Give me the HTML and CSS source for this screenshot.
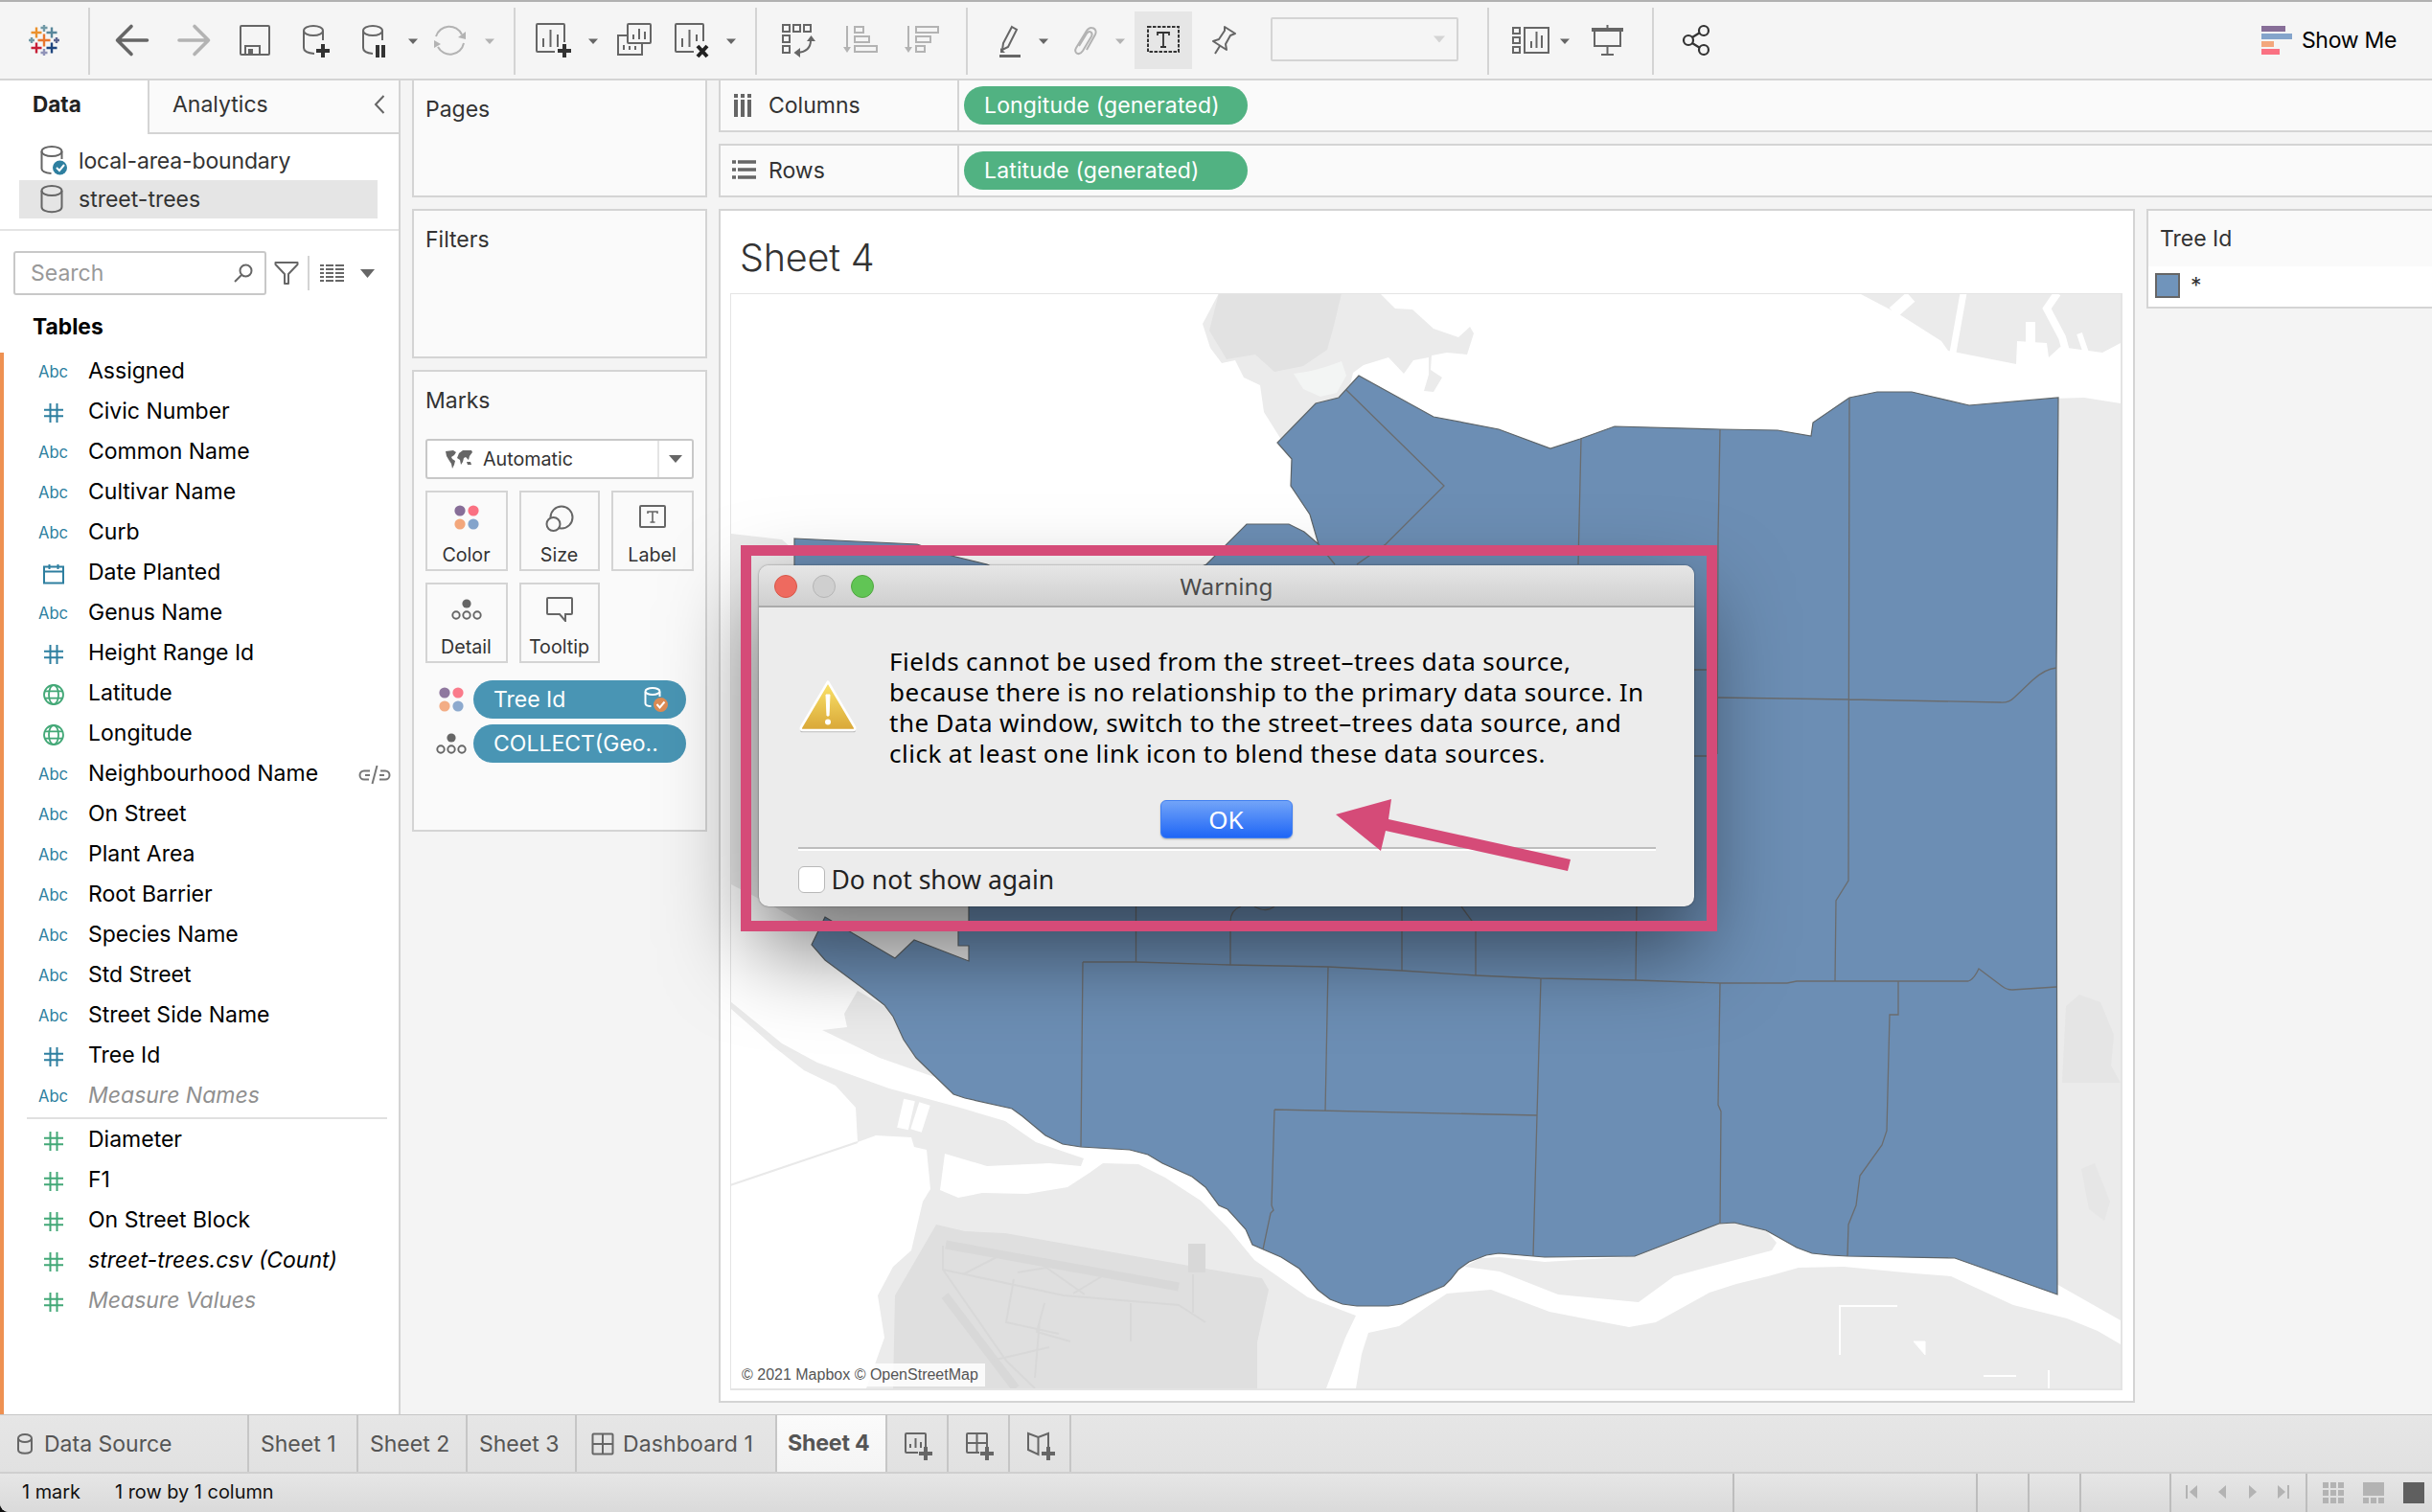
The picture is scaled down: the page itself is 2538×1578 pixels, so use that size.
FILE: index.html
```
<!DOCTYPE html>
<html lang="en">
<head>
<meta charset="utf-8">
<title>Sheet 4</title>
<link rel="stylesheet" href="styles.css">
</head>
<body>
<svg class="defs" width="0" height="0" aria-hidden="true">
  <symbol id="hash" viewBox="0 0 36 42"><path d="M14.5 11v20M21.5 11v20M8 17.7h20M8 24.3h20" fill="none" stroke="currentColor" stroke-width="2"/></symbol>
  <symbol id="calendar" viewBox="0 0 36 42"><path d="M8 13.5h20v17H8zM8 18.5h20M13.5 11v5M22.5 11v5" fill="none" stroke="currentColor" stroke-width="2"/></symbol>
  <symbol id="globe" viewBox="0 0 36 42"><g fill="none" stroke="currentColor" stroke-width="1.8"><circle cx="18" cy="21" r="10"/><ellipse cx="18" cy="21" rx="5" ry="10"/><path d="M9 17.3h18M9 24.7h18"/></g></symbol>
  <symbol id="caret" viewBox="0 0 10 6"><path d="M0 0h10L5 6z" fill="currentColor"/></symbol>
  <symbol id="dots" viewBox="0 0 26 26"><circle cx="6" cy="6" r="5.6" fill="#876e98"/><circle cx="20" cy="6" r="5.6" fill="#fa7182"/><circle cx="6" cy="20" r="5.6" fill="#f3a77c"/><circle cx="20" cy="20" r="5.6" fill="#84a4cb"/></symbol>
  <symbol id="detail" viewBox="0 0 32 22"><circle cx="16" cy="5" r="4.6" fill="#666"/><g fill="none" stroke="#666" stroke-width="1.9"><circle cx="5" cy="17" r="3.7"/><circle cx="16" cy="17" r="3.7"/><circle cx="27" cy="17" r="3.7"/></g></symbol>
</svg>

<div class="app">
  <header class="toolbar">
    <svg width="92" viewBox="0 2 92 80" fill="none" stroke-width="2.4">
      <path d="M46 35.5v13M39.5 42h13" stroke="#e8762d"/>
      <path d="M38 28.5v11M32.5 34h11" stroke="#eb912c"/>
      <path d="M54 28.5v11M48.5 34h11" stroke="#59879b"/>
      <path d="M38 44.5v11M32.5 50h11" stroke="#c72037"/>
      <path d="M54 44.5v11M48.5 50h11" stroke="#1f457e"/>
      <path d="M46 26v7M42.5 29h7" stroke="#7199a6"/>
      <path d="M46 51v7M42.5 55h7" stroke="#9093b8"/>
      <path d="M33 39v6M30 42h6" stroke="#7199a6"/>
      <path d="M59 39v6M56 42h6" stroke="#5b6591"/>
    </svg>
    <i class="sep"></i>
    <svg width="76" viewBox="94 2 76 80"><path d="M153.5 42H123M137 27.5L122.5 42 137 56.5" fill="none" stroke="#666" stroke-width="3.6" stroke-linecap="round" stroke-linejoin="round"/></svg>
    <svg width="65" viewBox="170 2 65 80"><path d="M187 42h30.5M203 27.5L217.5 42 203 56.5" fill="none" stroke="#b3b3b3" stroke-width="3.6" stroke-linecap="round" stroke-linejoin="round"/></svg>
    <svg width="65" viewBox="235 2 65 80" fill="none" stroke="#666" stroke-width="2"><rect x="251" y="27" width="30" height="30" rx="1"/><path d="M256 57v-9h15v9"/><rect x="259" y="51" width="5" height="5" fill="#666" stroke="none"/></svg>
    <svg width="62" viewBox="300 2 62 80" fill="none" stroke="#666" stroke-width="2"><ellipse cx="327" cy="32" rx="10" ry="5"/><path d="M317 32v18q0 5 11 6M337 32v10"/><path d="M330 53h14M337 46v14" stroke="#333" stroke-width="4"/></svg>
    <svg width="50" viewBox="362 2 50 80" fill="none" stroke="#666" stroke-width="2"><ellipse cx="389" cy="32" rx="10" ry="5"/><path d="M379 32v18q0 5 10 6M399 32v10"/><path d="M394 47v13M400 47v13" stroke="#333" stroke-width="4"/></svg>
    <svg width="32" viewBox="412 2 32 80"><path d="M426 40.5h10l-5 5.5z" fill="#666"/></svg>
    <svg width="54" viewBox="444 2 54 80" fill="none" stroke="#b3b3b3" stroke-width="2"><path d="M455 38a14.5 14.5 0 0 1 27-2M484 45a14.5 14.5 0 0 1-27 4"/><path d="M486 33v8l-8-2zM453 50v-8l7 4z" fill="#b3b3b3" stroke="none"/></svg>
    <svg width="38" viewBox="498 2 38 80"><path d="M506 40.5h10l-5 5.5z" fill="#b3b3b3"/></svg>
    <i class="sep"></i>
    <svg width="66" viewBox="538 2 66 80" fill="none" stroke="#666" stroke-width="2"><path d="M589 44V26q0-1-1-1h-27q-1 0-1 1v27q0 1 1 1h18M567 49v-9M574.5 49V31M582 49V36"/><path d="M582 53h14M589 46v14" stroke="#333" stroke-width="4"/></svg>
    <svg width="30" viewBox="604 2 30 80"><path d="M614 40.5h10l-5 5.5z" fill="#666"/></svg>
    <svg width="58" viewBox="634 2 58 80" fill="none" stroke="#666" stroke-width="2"><rect x="655" y="25" width="24" height="20" rx="1"/><path d="M655 37h-10v20h25V45M661 41v-5M667 41V30M673 41v-8M651 52v-5M657 52v-4M663 52v-4"/></svg>
    <svg width="58" viewBox="692 2 58 80" fill="none" stroke="#666" stroke-width="2"><path d="M734 43V26q0-1-1-1h-27q-1 0-1 1v27q0 1 1 1h18M712 49v-9M719.5 49V31M727 43V36"/><path d="M728 48l10 11M738 48l-10 11" stroke="#222" stroke-width="4"/></svg>
    <svg width="38" viewBox="750 2 38 80"><path d="M758 40.5h10l-5 5.5z" fill="#666"/></svg>
    <i class="sep"></i>
    <svg width="76" viewBox="790 2 76 80" fill="none" stroke="#666" stroke-width="2"><rect x="817" y="26" width="7" height="7"/><rect x="828" y="26" width="7" height="7"/><rect x="839" y="26" width="7" height="7"/><rect x="817" y="37" width="7" height="7"/><rect x="817" y="48" width="7" height="7"/><path d="M846 42q0 12-14 13"/><path d="M842 43l4.5-6 4.5 6zM835 50l-6.5 5 6.5 5z" fill="#666" stroke="none"/></svg>
    <svg width="64" viewBox="866 2 64 80" fill="none" stroke="#b3b3b3" stroke-width="2"><path d="M884 27v24"/><path d="M880 49h8l-4 6z" fill="#b3b3b3" stroke="none"/><rect x="892" y="28" width="9" height="6"/><rect x="892" y="38" width="15" height="6"/><rect x="892" y="48" width="23" height="6"/></svg>
    <svg width="78" viewBox="930 2 78 80" fill="none" stroke="#b3b3b3" stroke-width="2"><path d="M948 27v24"/><path d="M944 49h8l-4 6z" fill="#b3b3b3" stroke="none"/><rect x="956" y="28" width="23" height="6"/><rect x="956" y="38" width="15" height="6"/><rect x="956" y="48" width="9" height="6"/></svg>
    <i class="sep"></i>
    <svg width="64" viewBox="1010 2 64 80" fill="none" stroke="#666" stroke-width="2"><path d="M1056 28l5 3-9 18-6 3 1-7z"/><path d="M1043 58.5h22" stroke-width="3"/><path d="M1044 50l5 5h-5z" fill="#666" stroke="none"/></svg>
    <svg width="32" viewBox="1074 2 32 80"><path d="M1084 40.5h10l-5 5.5z" fill="#666"/></svg>
    <svg width="48" viewBox="1106 2 48 80" fill="none" stroke="#b3b3b3" stroke-width="2"><path d="M1126 48l8-13c3-4 7-1 5 3l-9 15c-4 6-10 2-7-3l11-18c4-6 12-2 9 4l-9 16"/></svg>
    <svg width="30" viewBox="1154 2 30 80"><path d="M1164 40.500h10l-5 5.500z" fill="#b3b3b3"/></svg>
    <svg width="60" viewBox="1184 2 60 80" fill="none" stroke="#333" stroke-width="2"><rect class="tool-bg" x="1184" y="12" width="60" height="60"/><rect x="1198" y="28" width="32" height="26" stroke-dasharray="3.5 1.5"/><path d="M1208 37v-3h12v3M1214 34v15M1211 49h6" stroke-width="1.8"/></svg>
    <svg width="66" viewBox="1244 2 66 80" fill="none" stroke="#666" stroke-width="2"><path d="M1278 28l11 7-5 2-5 9 1 6-14-9 6-2 6-9zM1273 48l-5 8" stroke-linejoin="round"/></svg>
    <div class="combo"><svg width="12" height="8"><use href="#caret"/></svg></div>
    <i class="sep"></i>
    <svg width="68" viewBox="1554 2 68 80" fill="none" stroke="#666" stroke-width="2"><rect x="1579" y="29" width="7" height="6"/><rect x="1579" y="39" width="7" height="6"/><rect x="1579" y="49" width="7" height="6"/><rect x="1591" y="29" width="25" height="26"/><path d="M1598 50v-7M1603.5 50V33M1609 50V37"/></svg>
    <svg width="24" viewBox="1622 2 24 80"><path d="M1628 40.5h10l-5 5.5z" fill="#666"/></svg>
    <svg width="78" viewBox="1646 2 78 80" fill="none" stroke="#666" stroke-width="2"><path d="M1661 31h33" stroke-width="4"/><path d="M1664 32v16h27V32M1677.5 26v4M1677.5 48v8M1671 57h13"/></svg>
    <i class="sep"></i>
    <svg width="80" viewBox="1726 2 80 80" fill="none" stroke="#333" stroke-width="2.2"><circle cx="1762" cy="42" r="5"/><circle cx="1778" cy="32" r="5"/><circle cx="1778" cy="52" r="5"/><path d="M1766 39l8-5M1766 45l8 5"/></svg>
    <div class="showme"><svg width="32" height="30"><path d="M0 0h25v6H0z" fill="#876e98"/><path d="M0 8h32v6H0z" fill="#84a4cb"/><path d="M0 16h13v6H0z" fill="#f3a77c"/><path d="M0 24h19v6H0z" fill="#fa7182"/></svg><span>Show Me</span></div>
  </header>

  <main class="work">
    <aside class="sidebar">
      <div class="side-tabs">
        <div class="side-tab on">Data</div>
        <div class="side-tab off"><span>Analytics</span><svg width="12" height="20"><path d="M10.5 1L2 10l8.500 9" fill="none" stroke="#666" stroke-width="2"/></svg></div>
      </div>
      <div class="sources">
        <div class="source"><svg width="30" height="34" fill="none" stroke="#666" stroke-width="2"><ellipse cx="12" cy="7" rx="10.5" ry="5"/><path d="M1.5 7v18q0 4 10 5M22.5 7v8"/><circle cx="20.5" cy="24" r="7.5" fill="#2e7fa0" stroke="none"/><path d="M17 24l3 3 5-6" stroke="#fff"/></svg><span>local-area-boundary</span></div>
        <div class="source picked"><svg width="30" height="34" fill="none" stroke="#666" stroke-width="2"><ellipse cx="12" cy="8" rx="10.5" ry="5"/><path d="M1.5 8v17c0 7 21 7 21 0V8"/></svg><span>street-trees</span></div>
      </div>
      <div class="finder">
        <div class="search"><span>Search</span><svg width="20" height="20" fill="none" stroke="#666" stroke-width="2"><circle cx="12.5" cy="7.5" r="6"/><path d="M8 12l-7 7"/></svg></div>
        <svg class="funnel" width="26" height="26" fill="none" stroke="#666" stroke-width="2"><path d="M1.5 2h23v2L15 14v10h-4V14L1.5 4z" stroke-linejoin="round"/></svg>
        <i></i>
        <svg class="list" width="26" height="20" stroke="#666" stroke-width="2.2"><path d="M0 2h4M6 2h8M16 2h9M0 6h4M6 6h8M16 6h9M0 10h4M6 10h8M16 10h9M0 14h4M6 14h8M16 14h9M0 18h4M6 18h8M16 18h9"/></svg>
        <svg width="15" height="9"><path d="M0 0h15L7.5 9z" fill="#666"/></svg>
      </div>
      <h2>Tables</h2>
      <div class="tables">
        <ul>
          <li><b>Abc</b><span>Assigned</span></li>
          <li><svg><use href="#hash"/></svg><span>Civic Number</span></li>
          <li><b>Abc</b><span>Common Name</span></li>
          <li><b>Abc</b><span>Cultivar Name</span></li>
          <li><b>Abc</b><span>Curb</span></li>
          <li><svg><use href="#calendar"/></svg><span>Date Planted</span></li>
          <li><b>Abc</b><span>Genus Name</span></li>
          <li><svg><use href="#hash"/></svg><span>Height Range Id</span></li>
          <li><svg class="green"><use href="#globe"/></svg><span>Latitude</span></li>
          <li><svg class="green"><use href="#globe"/></svg><span>Longitude</span></li>
          <li><b>Abc</b><span>Neighbourhood Name</span><svg class="link" viewBox="0 0 34 20" fill="none" stroke="#777" stroke-width="2"><path d="M12 5.500H6a4.500 4.500 0 0 0 0 9h5M7 10h5M22 14.500h6a4.500 4.500 0 0 0 0-9h-5M27 10h-5M19.500 0l-5 19"/></svg></li>
          <li><b>Abc</b><span>On Street</span></li>
          <li><b>Abc</b><span>Plant Area</span></li>
          <li><b>Abc</b><span>Root Barrier</span></li>
          <li><b>Abc</b><span>Species Name</span></li>
          <li><b>Abc</b><span>Std Street</span></li>
          <li><b>Abc</b><span>Street Side Name</span></li>
          <li><svg><use href="#hash"/></svg><span>Tree Id</span></li>
          <li class="it dim"><b>Abc</b><span>Measure Names</span></li>
        </ul>
        <ul class="measures">
          <li><svg><use href="#hash"/></svg><span>Diameter</span></li>
          <li><svg><use href="#hash"/></svg><span>F1</span></li>
          <li><svg><use href="#hash"/></svg><span>On Street Block</span></li>
          <li class="it"><svg><use href="#hash"/></svg><span>street-trees.csv (Count)</span></li>
          <li class="it dim"><svg><use href="#hash"/></svg><span>Measure Values</span></li>
        </ul>
      </div>
    </aside>

    <section class="cards">
      <div class="card pages">Pages</div>
      <div class="card filters">Filters</div>
      <div class="card marks">
        <div class="marks-title">Marks</div>
        <div class="mark-type">
          <svg width="28" height="20" fill="#666"><path d="M0 2l8-1 3 2-2 3-3 2 1 2 3 2-1 4-2 4-1-5-2-3-3-5zM14 4l4-3 9 0 1 2-3 4-1 4-3-3-2 1-1 4-2 3-1-5-3-2zM22 13l4 0 1 3-4 0z"/></svg>
          <span>Automatic</span><i><svg width="14" height="8"><path d="M0 0h14L7 8z" fill="#666"/></svg></i>
        </div>
        <div class="mark-grid">
          <div><svg width="26" height="26"><use href="#dots"/></svg>Color</div>
          <div><svg width="30" height="28" fill="none" stroke="#666" stroke-width="2"><circle cx="17" cy="13" r="11.5"/><circle cx="8.5" cy="20" r="7" fill="#fafafa"/></svg>Size</div>
          <div><svg width="28" height="24" fill="none" stroke="#666" stroke-width="2"><rect x="1" y="1" width="26" height="22" rx="1"/><path d="M9 9V7h10v2M14 7v11M11.5 18h5" stroke-width="1.6"/></svg>Label</div>
          <div><svg width="32" height="22"><use href="#detail"/></svg>Detail</div>
          <div><svg width="28" height="26" fill="none" stroke="#666" stroke-width="2"><path d="M1 2q0-1 1-1h24q1 0 1 1v15q0 1-1 1h-6v7l-6-7H2q-1 0-1-1z"/></svg>Tooltip</div>
        </div>
        <div class="shelf-pill"><svg class="faded" width="26" height="26"><use href="#dots"/></svg><div class="pill blue">Tree Id<svg width="26" height="26" fill="none" stroke="#fff" stroke-width="2"><ellipse cx="9" cy="4.5" rx="7.5" ry="3.5"/><path d="M1.5 5v12q0 3 6 3M16.5 5v5"/><circle cx="17.5" cy="18.500" r="7.5" fill="#dc8b54" stroke="none"/><path d="M13.5 18l3 3.500 5-6"/></svg></div></div>
        <div class="shelf-pill"><svg width="32" height="22"><use href="#detail"/></svg><div class="pill blue">COLLECT(Geo..</div></div>
      </div>
    </section>

    <section class="view">
      <div class="shelf"><div class="shelf-name"><svg width="22" height="24" stroke="#666" stroke-width="4"><path d="M4 0v4M4 6v18M11 0v4M11 6v18M18 0v4M18 6v18"/></svg>Columns</div><div class="pill green-pill">Longitude (generated)</div></div>
      <div class="shelf"><div class="shelf-name"><svg width="26" height="24" stroke="#666" stroke-width="3.6"><path d="M0 3h4M6 3h19M0 11h4M6 11h19M0 19h4M6 19h19"/></svg>Rows</div><div class="pill green-pill">Latitude (generated)</div></div>
      <div class="canvas-row">
        <div class="sheet">
          <h1>Sheet 4</h1>
          <div class="map">
            <svg width="1450" height="1142" viewBox="763 307 1450 1142">
              <g fill="#ebebeb">
                <path d="M1272 306L1255 338 1263 363 1275 379 1289 376 1298 394 1315 402 1319 430 1339 462 1400 440 1412 389 1423 381 1449 373 1465 390 1475 376 1491 373V391L1486 408 1496 409 1505 394 1493 386 1494 371 1510 368 1531 370 1538 348 1534 341 1522 352 1496 343 1474 323 1456 322 1440 306z"/>
                <path d="M1940 306L1982 328 2026 356 2033 366 2104 380 2105 356 2136 358 2138 373 2150 362 2194 368 2213 358V306z"/>
                <path d="M2140 416L2175 415 2213 421V1378L2146 1340z"/>
                <path d="M2213 1403L2189 1389 2157 1376 2101 1362 2036 1332 1998 1329 1924 1322 1877 1323 1845 1332 1812 1340 1784 1349 1728 1380 1700 1385 1663 1378 1617 1369 1556 1346 1510 1350 1486 1366 1460 1384 1428 1391 1421 1413 1415 1449H2213z"/>
                <path d="M1528 1322L1545 1313 1565 1312 1612 1317 1695 1312 1794 1270 1824 1278 1843 1284 1854 1297 1849 1305 1784 1322 1747 1332 1710 1359 1626 1351 1565 1327z"/>
                <path d="M762 1045L816 1089 853 1109 928 1136 1002 1156 1049 1170 1081 1192 1131 1209 1128 1217 1095 1214 1030 1217 986 1204 981 1242 1000 1250 1025 1245 1072 1246 1114 1239 1137 1224 1151 1214 1188 1215 1216 1229 1253 1253 1281 1281 1309 1315 1365 1354 1415 1373 1404 1396 1384 1449H904L923 1396 916 1352 932 1322 951 1305 963 1254 971 1241 967 1200 954 1197 951 1187 914 1185 895 1192 893 1156 872 1133 839 1117 807 1092 788 1075 762 1052z"/>
                <path d="M895 1034L881 1058 884 1072 858 1075 918 1104 975 1124 940 1060z"/>
                <path d="M763 557L816 563 835 580 1020 900V1015H920L853 972 802 943 763 923z"/>
              </g>
              <g fill="#e2e2e2">
                <path d="M1272 306L1262 345 1280 375 1310 370 1330 388 1360 382 1385 365 1392 340 1400 306z"/>
                <path d="M2156 1050L2170 1038 2192 1046 2206 1080 2203 1112 2213 1130H2152z" opacity=".7"/>
                <path d="M2172 1220l14-6 16 40-6 20-16-12z" opacity=".5"/>
              </g>
              <path fill="#dfdfdf" d="M977 1278L1007 1285 1049 1287 1258 1324 1317 1334 1324 1346 1312 1401V1449H932L934 1352z"/>
              <path d="M1350 390q22-2 50-13l5 15-10 18-17 4-18-8z" fill="#f3f5f4"/>
              <g fill="none" stroke="#d8d8d8">
                <path d="M987 1299L1230 1343" stroke-width="9"/><path d="M1249 1298V1328" stroke-width="18"/><path d="M986 1352L1060 1449" stroke-width="9"/>
                <path d="M984 1300V1325L1050 1420 1080 1449M984 1325L1110 1352 1230 1362 1258 1380M1005 1330l35-18M1062 1328l30-5 40 28M1120 1350l30-18M1058 1335l-8 45 55 12M1180 1360v40M1245 1330v40M1090 1360l-8 30 35 10M1035 1420l60-14M1085 1378l-5 60" stroke-width="2"/>
              </g>
              <g stroke="#fff" fill="none">
                <path d="M2049 306L2038 368" stroke-width="7"/><path d="M1994 310L1976 326" stroke-width="13"/><path d="M2119 336V380" stroke-width="10"/><path d="M2147 306L2136 322 2152 352 2158 374" stroke-width="8"/><path d="M2170 348l12 35" stroke-width="6"/>
                <path d="M949 1148l-7 30M965 1152l-9 28" stroke-width="12"/><path d="M1920 1414v-51h60M2070 1436h34M2138 1430v19" stroke-width="2"/><path d="M1997 1400h12v14z" fill="#fff"/>
              </g>
              <path d="M895 1192L762 1237" stroke="#e9e9e9" stroke-width="2"/>
              <path d="M829 562L957 568 993 580 1030 589 1140 640 1259 589 1301 547 1345 547 1361 555 1376 568 1367 537 1347 507 1348 479 1333 462 1373 421 1397 415 1418 392 1496 435 1564 448 1618 468 1649 458 1685 445 1795 448 1855 449 1890 455 1892 441 1930 415 1959 409H1995L2055 423 2148 415 2146 700 2147 1351 2040 1313 1928 1311 1910 1310 1891 1308 1875 1302 1843 1284 1822 1279 1810 1276 1794 1277 1706 1311 1612 1312 1564 1308 1551 1310 1533 1317 1522 1325 1514 1335 1507 1342 1463 1361 1449 1363H1416L1401 1361 1388 1356 1375 1346 1356 1324 1337 1312 1307 1299 1300 1283 1281 1262 1272 1258 1258 1239 1244 1228 1213 1214 1198 1205 1179 1200 1128 1197 1109 1194 1091 1185 1067 1165 1056 1157 1007 1146 995 1142 956 1104 943 1085 932 1061 923 1049 900 1031 861 1002 847 986 861 957 934 1000 954 981 1011 1003V987H1000V970H1011V900L829 700z" fill="#6c8eb4" stroke="#5d6468" stroke-width="1.2"/>
              <g fill="none" stroke="#6a6c6e" stroke-width="1.3">
                <path d="M1405 407L1507 507 1446 568 1416 589M1376 568L1393 589M1650 458L1647 589M1795 448L1793 560 1792 787M1768 699H1793M1768 789H1792M1793 728L1930 730 2087 733Q2096 734 2102 728L2121 710Q2134 698 2146 697M1930 415L1929 919 1916 940 1915 1024"/>
                <path d="M1130 1004H1185L1284 1007 1386 1009 1463 1013 1540 1018 1607 1021 1707 1023 1795 1026H1865L1875 1024H2054Q2060 1022 2065 1011L2089 1029Q2094 1033 2100 1033L2146 1030"/>
                <path d="M1185.5 940V1004M1295 946Q1284 950 1284 962V1007M1309 946q12 7 21 0M1463 940V1013M1525 946L1536 961 1540 972V1018M1708 940L1707 1023"/>
                <path d="M1130 1004L1128 1197M1386 1009L1383 1160M1608 1021L1604 1164 1600 1311M1330 1158L1604 1164M1330 1158L1327 1258 1329 1263 1326 1266 1318 1304M1795 1026L1793 1153 1796 1160 1795 1277M1981 1024V1059H1972L1969 1180 1964 1195 1941 1227 1937 1258 1929 1278 1928 1311"/>
              </g>
            </svg>
            <div class="credit">© 2021 Mapbox © OpenStreetMap</div>
          </div>
        </div>
        <div class="legend"><div class="legend-title">Tree Id</div><div class="legend-item"><i></i><span>*</span></div></div>
      </div>
    </section>
  </main>

  <nav class="tabs">
    <div class="tab source-tab"><svg width="18" height="24" fill="none" stroke="#666" stroke-width="2"><ellipse cx="9" cy="6" rx="7" ry="4"/><path d="M2 6v12c0 5 14 5 14 0V6"/></svg>Data Source</div>
    <div class="tab w114">Sheet 1</div>
    <div class="tab w114">Sheet 2</div>
    <div class="tab w114">Sheet 3</div>
    <div class="tab w208"><svg width="24" height="24" fill="none" stroke="#666" stroke-width="2"><rect x="1.5" y="1.5" width="21" height="21" rx="1"/><path d="M12 2v20M2 12h20"/></svg>Dashboard 1</div>
    <div class="tab current">Sheet 4</div>
    <div class="tab add"><svg width="30" height="30" fill="none" stroke="#666" stroke-width="2"><path d="M23 16V3q0-1-1-1H3Q2 2 2 3v18q0 1 1 1h12M7 17v-4M12.5 17V7M18 17v-6"/><path d="M16 23h14M23 16v14" stroke-width="4"/></svg></div>
    <div class="tab add"><svg width="30" height="30" fill="none" stroke="#666" stroke-width="2"><path d="M23 16V3q0-1-1-1H3Q2 2 2 3v18q0 1 1 1h12M12.5 2v20M2 12h21"/><path d="M16 23h14M23 16v14" stroke-width="4"/></svg></div>
    <div class="tab add"><svg width="30" height="30" fill="none" stroke="#666" stroke-width="2"><path d="M23 16V2L12.5 6 2 2v17l10.500 5V6"/><path d="M16 23h14M23 16v14" stroke-width="4"/></svg></div>
  </nav>

  <footer class="status">
    <span class="mark-count">1 mark</span><span>1 row by 1 column</span>
    <div class="cells">
      <div class="c254"></div><div class="c54"></div><div class="c54"></div><div class="c94"></div>
      <div class="c142"><svg width="142" height="40" viewBox="2267 1538 142 40" fill="#b3b3b3"><path d="M2282 1550h2v14h-2zM2294 1550v14l-8-7zM2324 1550v14l-8-7zM2348 1550v14l8-7zM2378 1550v14l8-7zM2388 1550h2v14h-2z"/></svg></div>
      <div class="c130"><svg width="129" height="40" viewBox="2409 1538 129 40" fill="#b3b3b3"><path d="M2425 1547h6v6h-6zM2433 1547h6v6h-6zM2441 1547h6v6h-6zM2425 1555h6v6h-6zM2433 1555h6v6h-6zM2441 1555h6v6h-6zM2425 1563h6v6h-6zM2433 1563h6v6h-6zM2441 1563h6v6h-6zM2467 1547h22v14h-22zM2467 1563h6v6h-6zM2475 1563h6v6h-6zM2483 1563h6v6h-6z"/><path d="M2509 1547h22v22h-22z" fill="#5f5f5f"/></svg></div>
    </div>
  </footer>

  <div class="dialog">
    <div class="titlebar"><div class="lights"><i class="red"></i><i></i><i class="lime"></i></div>Warning</div>
    <div class="message">
      <svg width="60" height="56" viewBox="0 0 60 56"><defs><linearGradient id="gold" x1="0" y1="0" x2="0" y2="1"><stop offset="0" stop-color="#fbe46b"/><stop offset="1" stop-color="#d9a737"/></linearGradient></defs><path d="M2.500 53h55" stroke="#bbb" stroke-width="2.500" stroke-linecap="round"/><path d="M30 1.500L58 49q1 3-2 3H4q-3 0-2-3z" fill="url(#gold)" stroke="#fff" stroke-width="2.5" stroke-linejoin="round"/><path d="M28 15h4l-1 22h-2z" fill="#fff" stroke="#fff" stroke-linejoin="round"/><circle cx="30" cy="43.5" r="3" fill="#fff"/></svg>
      <p>Fields cannot be used from the street–trees data source,<br>because there is no relationship to the primary data source. In<br>the Data window, switch to the street–trees data source, and<br>click at least one link icon to blend these data sources.</p>
    </div>
    <button class="ok">OK</button>
    <label class="again"><i></i>Do not show again</label>
  </div>
  <div class="highlight"></div>
  <svg class="arrow" width="248" height="78" viewBox="1392 832 248 78"><path d="M1394 850L1452 834 1449 855 1639 897 1636 909 1446 867 1441 888z" fill="#d54b78"/></svg>
</div>
</body>
</html>
```
FILE: styles.css
```
* { box-sizing: border-box; }
body { margin: 0; background: #111; }
.defs { position: absolute; }
svg { display: block; flex: none; }
i { font-style: normal; }
h1, h2, p, ul { margin: 0; padding: 0; list-style: none; }

.app {
  position: relative;
  display: grid;
  grid-template-rows: 84px 1392px 62px 40px;
  width: 2538px;
  height: 1578px;
  overflow: hidden;
  border-bottom-left-radius: 9px;
  background: #f4f4f4;
  color: #333;
  font: 23px/1 Inter, "Liberation Sans", sans-serif;
  white-space: nowrap;
}

/* toolbar */
.toolbar { display: flex; border-top: 2px solid #b1b1b1; border-bottom: 2px solid #d4d4d4; background: #f5f5f5; }
.toolbar > svg { height: 80px; }
.sep { width: 2px; height: 70px; margin-top: 6px; background: #d4d4d4; }
.tool-bg { fill: #e6e6e6; stroke: none; }
.combo { display: flex; justify-content: flex-end; align-items: center; width: 196px; height: 46px; margin: 16px 30px 0 16px; padding-right: 12px; border: 2px solid #d4d4d4; border-radius: 2px; color: #d4d4d4; }
.showme { display: flex; align-items: center; gap: 10px; margin-left: auto; padding-right: 37px; color: #000; letter-spacing: -.3px; }

.work { display: grid; grid-template-columns: 418px 332px 1788px; }

/* data pane */
.sidebar { display: flex; flex-direction: column; border-right: 2px solid #d4d4d4; background: #fff; }
.side-tabs { display: flex; height: 56px; }
.side-tab { line-height: 50px; }
.side-tab.on { width: 154px; padding-left: 34px; font-weight: 700; font-size: 22.5px; color: #222; }
.side-tab.off { display: flex; flex: 1; justify-content: space-between; padding: 0 14px 0 24px; border-left: 2px solid #d4d4d4; border-bottom: 2px solid #d4d4d4; background: #fafafa; line-height: 51px; }
.side-tab.off svg { margin-top: 15px; }
.sources { height: 101px; padding-top: 8px; border-bottom: 2px solid #e4e4e4; }
.source { display: flex; align-items: center; height: 40px; margin: 0 22px 0 20px; padding-left: 22px; gap: 10px; letter-spacing: -.15px; }
.source.picked { background: #e5e5e5; letter-spacing: 0; }
.finder { display: flex; align-items: center; height: 46px; margin: 21px 0 0 14px; }
.search { display: flex; align-items: center; justify-content: space-between; width: 264px; height: 46px; padding: 0 12px 0 16px; border: 2px solid #c8c8c8; border-radius: 3px; color: #999; }
.funnel { margin: 0 9px 0 8px; }
.finder i { width: 2px; height: 36px; margin-right: 11px; background: #d4d4d4; }
.list { margin-right: 16px; }
h2 { height: 60px; padding-left: 34px; font-size: 22.8px; line-height: 66px; font-weight: 700; color: #000; }
.tables { flex: 1; border-left: 4px solid #ee9152; }
li { display: flex; align-items: center; height: 42px; padding-left: 34px; color: #000; }
li span { padding-bottom: 3px; }
li b { width: 54px; padding: 0 0 1px 2px; font-size: 16.6px; font-weight: 400; color: #2e7fa0; }
li > svg { width: 36px; height: 42px; margin-right: 18px; color: #2e7fa0; }
li > svg.green, .measures svg { color: #43a877; }
li > svg.link { width: 34px; height: 20px; margin: 0 8px 0 auto; }
.it { font-style: italic; }
.it b { font-style: normal; }
.dim { color: #8f8f8f; }
.measures { position: relative; margin-top: 4px; }
.measures::before { content: ""; position: absolute; top: -4px; left: 24px; right: 12px; height: 2px; background: #e0e0e0; }

/* cards */
.cards { display: flex; flex-direction: column; gap: 12px; padding: 0 12px; margin-top: -2px; }
.card { border: 2px solid #d4d4d4; background: #fafafa; padding: 18px 12px; line-height: 24px; }
.pages { height: 124px; }
.filters { height: 156px; }
.marks { height: 482px; }
.marks-title { height: 52px; }
.mark-type { display: flex; align-items: center; width: 280px; height: 42px; padding-left: 19px; border: 2px solid #c8c8c8; border-radius: 3px; background: #fff; font-size: 19.7px; }
.mark-type span { margin-left: 11px; }
.mark-type i { display: flex; align-items: center; justify-content: center; width: 36px; height: 38px; margin-left: auto; border-left: 2px solid #e4e4e4; }
.mark-grid { display: grid; grid-template-columns: 86px 84px 86px; gap: 12px; margin: 12px 0 18px; }
.mark-grid div { display: flex; flex-direction: column; align-items: center; height: 84px; border: 2px solid #d4d4d4; font-size: 19.7px; justify-content: space-between; padding: 13px 1px 3px 0; }
.mark-grid div:nth-child(4) svg { margin-top: 2px; }
.shelf-pill { display: flex; align-items: center; justify-content: flex-end; width: 272px; margin-bottom: 6px; }
.shelf-pill > svg { margin-right: 7px; }
.shelf-pill > .faded { margin-right: 10px; opacity: .92; }
.pill { display: flex; align-items: center; height: 40px; border-radius: 20px; color: #fff; }
.blue { width: 222px; padding: 0 18px 0 21px; justify-content: space-between; background: #4995b4; }

/* shelves */
.view { margin-top: -2px; }
.shelf { display: flex; align-items: center; height: 56px; margin-bottom: 12px; border: 2px solid #d4d4d4; border-right: 0; background: #fafafa; }
.shelf-name { display: flex; align-items: center; width: 249px; height: 52px; padding-left: 12px; border-right: 2px solid #d4d4d4; }
.shelf-name svg { width: 26px; margin-right: 12px; }
.green-pill { width: 296px; margin-left: 5px; padding-left: 21px; background: #51b282; letter-spacing: .15px; }

/* sheet */
.canvas-row { display: flex; gap: 12px; }
.sheet { width: 1478px; height: 1246px; padding: 0 11px; border: 2px solid #d4d4d4; background: #fff; }
h1 { height: 86px; padding-left: 9px; font-size: 39.5px; font-weight: 300; line-height: 98px; letter-spacing: -.2px; }
.map { position: relative; width: 1453px; height: 1145px; border: 1px solid #e4e4e4; border-width: 1px 2px 2px 1px; margin-left: -1px; }
.credit { position: absolute; left: 5px; bottom: 2px; width: 260px; padding-left: 6px; background: rgba(255,255,255,.85); font: 16px/24px "Liberation Sans", Arial, sans-serif; color: #555; }
.legend { flex: 1; height: 104px; border: 2px solid #d4d4d4; border-right: 0; background: #fff; }
.legend-title { height: 58px; padding-left: 12px; line-height: 59px; background: #fafafa; }
.legend-item { display: flex; padding: 7px 0 0 7px; gap: 11px; line-height: 26px; }
.legend-item i { width: 26px; height: 26px; border: 2px solid #666; background: #7094bb; }

/* sheet tabs and status bar */
.tabs { display: flex; border-top: 1px solid #c6c6c6; border-bottom: 2px solid #cfcfcf; background: linear-gradient(#e6e6e6, #e1e1e1); color: #555; }
.tab { display: flex; align-items: center; padding: 1px 0 0 13px; border-right: 2px solid #c6c6c6; }
.source-tab { width: 260px; padding-left: 17px; gap: 11px; }
.w114 { width: 114px; padding-left: 12px; }
.w208 { width: 209px; padding-left: 15px; gap: 9px; letter-spacing: .15px; }
.current { width: 115px; padding-left: 11px; background: linear-gradient(#fbfbfb, #f4f4f4); font-size: 23.2px; font-weight: 700; letter-spacing: -.2px; }
.add { width: 64px; padding: 4px 0 0 17px; }
.status { display: flex; align-items: center; padding-left: 23px; background: linear-gradient(#e6e6e6, #dadada); color: #111; font-size: 19.9px; }
.mark-count { width: 97px; }
.cells { display: flex; height: 40px; margin-left: auto; }
.cells div { border-left: 2px solid #bdbdbd; }
.c254 { width: 254px; } .c54 { width: 54px; } .c94 { width: 94px; } .c142 { width: 142px; } .c130 { width: 132px; }

/* warning dialog */
.dialog {
  position: absolute; left: 792px; top: 590px; width: 976px; height: 356px;
  display: flex; flex-direction: column; align-items: center;
  border-radius: 10px; background: #ececec;
  box-shadow: 0 0 2px rgba(0,0,0,.5), 0 40px 90px 6px rgba(0,0,0,.5);
  font-family: "Noto Sans", "Open Sans", sans-serif; color: #000;
}
.titlebar { position: relative; width: 100%; height: 44px; border-bottom: 2px solid #ababab; border-radius: 10px 10px 0 0; background: linear-gradient(#e6e6e6, #cfcfcf); font-size: 24.3px; line-height: 44px; text-align: center; color: #4a4a4a; }
.lights { position: absolute; left: 16px; top: 10px; display: flex; gap: 16px; }
.lights i { width: 24px; height: 24px; border-radius: 50%; border: 1px solid #b5b5b5; background: #cfcfcf; }
.lights .red { background: #ee6a5f; border-color: #d85648; }
.lights .lime { background: #61c555; border-color: #50a73f; }
.message { display: flex; align-items: flex-start; width: 100%; height: 201px; padding: 40px 0 0 42px; }
.message svg { margin-top: 36px; }
.message p { margin-left: 34px; font-size: 26px; line-height: 32px; letter-spacing: .53px; word-spacing: -.5px; }
.ok { width: 138px; height: 40px; padding: 0 1px 0 0; border: 1px solid #3f7ef0; border-radius: 6px; background: linear-gradient(#72a4f8, #1f66f6); color: #fff; font: 26px/35px "Noto Sans", sans-serif; box-shadow: 0 1px 2px rgba(0,0,0,.25); }
.again { display: flex; align-items: center; width: 895px; margin-top: 9px; padding-top: 14px; border-top: 2px solid #bdbdbd; box-shadow: inset 0 2px #fff; font-size: 26.5px; line-height: 36px; color: #222; }
.again i { width: 28px; height: 28px; margin-right: 7px; border: 1px solid #b8b8b8; border-radius: 6px; background: #fff; }
.highlight { position: absolute; left: 773px; top: 569px; width: 1019px; height: 403px; border: 11px solid #d54b78; }
.arrow { position: absolute; left: 1392px; top: 832px; }
```
